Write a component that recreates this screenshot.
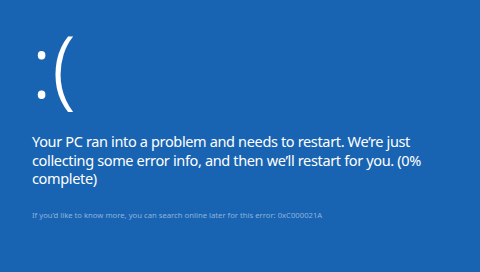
export default function App() {
  return (
    <div
      className="w-[480px] h-[272px] bg-[#1964b2] text-white overflow-hidden pl-[32px] pt-[20px]"
      style={{ fontFamily: '"Noto Sans", "Open Sans", sans-serif' }}
    >
      <div className="text-[86px] leading-[90px] font-light -ml-[1px]">:(</div>
      <p className="mt-[22px] w-[412px] text-[14.5px] leading-[18.5px] tracking-[-0.35px]">
        Your PC ran into a problem and needs to restart. We’re just collecting some error info, and then we’ll restart for you. (0% complete)
      </p>
      <p className="mt-[22px] text-[7.7px] leading-[10px] text-[#8db3de]">
        If you’d like to know more, you can search online later for this error: 0xC000021A
      </p>
    </div>
  )
}
